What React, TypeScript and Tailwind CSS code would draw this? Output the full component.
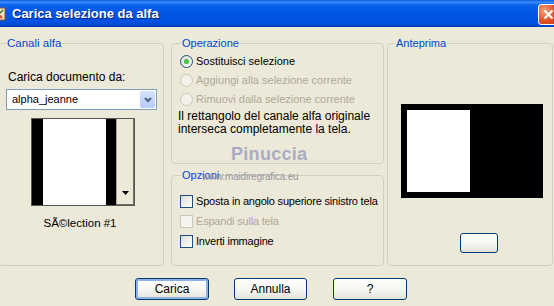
import React from "react";

const font = { fontFamily: '"Liberation Sans", Arial, sans-serif' };

function Radio({ label, checked, disabled }: { label: string; checked?: boolean; disabled?: boolean }) {
  return (
    <div className="flex items-center h-[19px]">
      <div
        className={
          "w-[13px] h-[13px] shrink-0 rounded-full border flex items-center justify-center " +
          (disabled
            ? "border-[#CAC8BB] bg-[#F3F2EA]"
            : "border-[#1C5180] bg-[linear-gradient(135deg,#DCDCD6,#FFFFFF)]")
        }
      >
        {checked && <div className="w-[5px] h-[5px] rounded-full bg-[radial-gradient(circle,#5FDB55,#21A121)]" />}
      </div>
      <span className={"ml-[3px] whitespace-nowrap text-[11px] " + (disabled ? "text-[#ACA899]" : "text-black")}>{label}</span>
    </div>
  );
}

function Check({ label, disabled }: { label: string; disabled?: boolean }) {
  return (
    <div className="flex items-center h-[20px]">
      <div
        className={
          "w-[13px] h-[13px] shrink-0 border " +
          (disabled ? "border-[#CAC8BB] bg-[#F5F4EE]" : "border-[#1C5180] bg-[linear-gradient(135deg,#DCDCD6,#FFFFFF)]")
        }
      />
      <span className={"ml-[3px] whitespace-nowrap text-[11px] tracking-[-0.2px] " + (disabled ? "text-[#ACA899]" : "text-black")}>{label}</span>
    </div>
  );
}

function XPButton({ children, def, w }: { children?: React.ReactNode; def?: boolean; w: string }) {
  return (
    <div
      className={
        w +
        " rounded-[3px] border border-[#003C74] bg-[linear-gradient(180deg,#FFFFFF,#F4F4F0_60%,#E3E1D6)] flex items-center justify-center text-[12px] text-black " +
        (def ? "shadow-[inset_0_0_0_2px_#8DB2E3]" : "")
      }
    >
      {children}
    </div>
  );
}

export default function App() {
  return (
    <div className="w-[554px] h-[306px] overflow-hidden bg-[#ECE9D8] flex flex-col" style={font}>
      {/* title bar */}
      <div className="h-[27px] flex items-center bg-[linear-gradient(180deg,#0A5CE0_0%,#3C8CF8_8%,#0A62EE_18%,#0055E5_50%,#0050DF_85%,#003DBB_100%)]">
        <svg width="14" height="16" viewBox="0 0 14 16" className="-ml-[8px] mr-[6px]">
          <rect x="1" y="2" width="12" height="12" fill="#F3E3C2" stroke="#8A5A2A" />
          <path d="M3 5 L10 12" stroke="#D64A20" strokeWidth="2" />
          <path d="M4 11 L11 4" stroke="#3A7A2A" strokeWidth="1.5" />
        </svg>
        <span className="text-white font-bold text-[13px] [text-shadow:1px_1px_0_#0A1E7A]">Carica selezione da alfa</span>
        <div className="ml-auto mr-[-5px] mt-[1px] w-[21px] h-[21px] rounded-[3px] border border-white bg-[radial-gradient(circle_at_30%_30%,#F0A080,#E2502A_55%,#C23A1A)] flex items-center justify-center">
          <svg width="11" height="11" viewBox="0 0 11 11">
            <path d="M1.5 1.5 L9.5 9.5 M9.5 1.5 L1.5 9.5" stroke="white" strokeWidth="2.2" />
          </svg>
        </div>
      </div>

      {/* body */}
      <div className="flex mt-[10px] h-[229px]">
        {/* Canali alfa */}
        <fieldset className="-ml-[2px] w-[166px] h-[229px] border border-[#D0D0BF] rounded-[4px] px-0 pb-0 min-w-0">
          <legend className="ml-[7px] px-[1px] text-[11.5px] leading-[12px] text-[#0046D5]">Canali alfa</legend>
          <div className="pl-[9px] pt-[21px] text-[12px] text-black leading-[14px]">Carica documento da:</div>
          <div className="ml-[7px] mt-[5px] w-[151px] h-[21px] bg-white border border-[#7F9DB9] flex items-center">
            <span className="ml-[5px] text-[11px] text-black">alpha_jeanne</span>
            <div className="ml-auto mr-[1px] w-[15px] h-[17px] rounded-[2px] bg-[linear-gradient(180deg,#D6E3FC,#B6CBF6)] flex items-center justify-center">
              <svg width="8" height="6" viewBox="0 0 8 6">
                <path d="M1 1 L4 4 L7 1" stroke="#4D6185" strokeWidth="2" fill="none" />
              </svg>
            </div>
          </div>
          <div className="ml-[32px] mt-[8px] w-[104px] h-[88px] border border-[#555] flex bg-[#ECE9D8]">
            <div className="w-[11px] bg-black" />
            <div className="w-[63px] bg-white" />
            <div className="w-[10px] bg-black" />
            <div className="flex-1 border-l border-[#ACA899] border-r border-b border-r-[#716F64] border-b-[#716F64] bg-[#ECE9D8] flex items-end justify-center pb-[9px]">
              <svg width="7" height="4" viewBox="0 0 7 4">
                <path d="M0 0 L7 0 L3.5 4 Z" fill="black" />
              </svg>
            </div>
          </div>
          <div className="mt-[9px] ml-[2px] text-center text-[11.5px] text-black pr-[4px]">SÃ©lection #1</div>
        </fieldset>

        {/* middle column */}
        <div className="ml-[7px] w-[213px] flex flex-col relative">
          <fieldset className="w-[213px] h-[127px] border border-[#D0D0BF] rounded-[4px] px-0 pb-0 min-w-0">
            <legend className="ml-[9px] px-[1px] text-[11px] leading-[12px] text-[#0046D5]">Operazione</legend>
            <div className="pl-[8px] pt-[3px] flex flex-col">
              <Radio label="Sostituisci selezione" checked />
              <Radio label="Aggiungi alla selezione corrente" disabled />
              <Radio label="Rimuovi dalla selezione corrente" disabled />
            </div>
            <div className="pl-[6px] pt-[1px] text-[12px] leading-[13px] text-black whitespace-nowrap">
              Il rettangolo del canale alfa originale
              <br />
              interseca completamente la tela.
            </div>
          </fieldset>
          <fieldset className="mt-[5px] w-[213px] h-[97px] border border-[#D0D0BF] rounded-[4px] px-0 pb-0 min-w-0">
            <legend className="ml-[9px] px-[1px] text-[11px] leading-[12px] text-[#0046D5]">Opzioni</legend>
            <div className="pl-[8px] pt-[10px] flex flex-col">
              <Check label="Sposta in angolo superiore sinistro tela" />
              <Check label="Espandi sulla tela" disabled />
              <Check label="Inverti immagine" />
            </div>
          </fieldset>
          {/* watermark */}
          <div className="absolute left-[60px] top-[104px] text-[18px] font-bold tracking-[0.3px] text-[#A3A6C4] opacity-90 pointer-events-none">
            Pinuccia
          </div>
          <div className="absolute left-[31px] top-[132px] text-[10px] tracking-[-0.2px] text-[#8E8E9C] opacity-90 pointer-events-none">
            www.maidiregrafica.eu
          </div>
        </div>

        {/* Anteprima */}
        <fieldset className="ml-[3px] w-[166px] h-[229px] border border-[#D0D0BF] rounded-[4px] px-0 pb-0 min-w-0">
          <legend className="ml-[7px] px-[1px] text-[11px] leading-[12px] text-[#0046D5]">Anteprima</legend>
          <div className="ml-[13px] mt-[55px] w-[142px] h-[94px] bg-black p-[6px]">
            <div className="w-[63px] h-[82px] bg-white" />
          </div>
          <div className="ml-[72px] mt-[35px]">
            <XPButton w="w-[38px] h-[20px]" />
          </div>
        </fieldset>
      </div>

      {/* buttons */}
      <div className="flex mt-[12px] pl-[135px]">
        <XPButton w="w-[74px] h-[22px]" def>Carica</XPButton>
        <div className="ml-[25px]">
          <XPButton w="w-[73px] h-[22px]">Annulla</XPButton>
        </div>
        <div className="ml-[26px]">
          <XPButton w="w-[74px] h-[22px]">?</XPButton>
        </div>
      </div>
    </div>
  );
}
